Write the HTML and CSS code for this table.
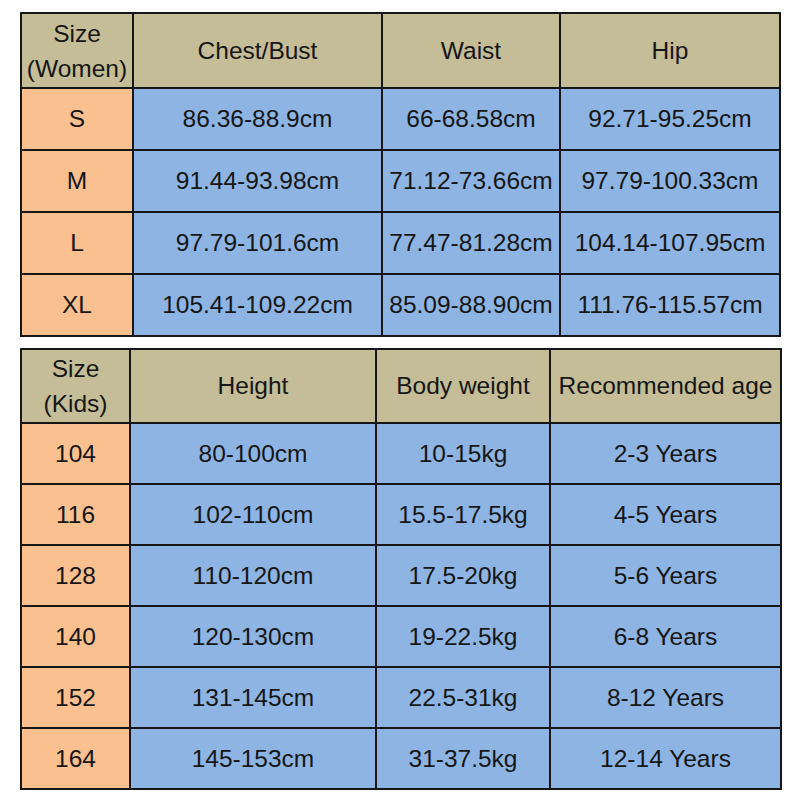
FILE: index.html
```html
<!DOCTYPE html>
<html>
<head>
<meta charset="utf-8">
<link rel="stylesheet" href="styles.css">
</head>
<body>
<div class="page">
  <div class="chart women">
    <div class="cell hd two">Size<br>(Women)</div>
    <div class="cell hd">Chest/Bust</div>
    <div class="cell hd">Waist</div>
    <div class="cell hd">Hip</div>

    <div class="cell sz">S</div>
    <div class="cell v">86.36-88.9cm</div>
    <div class="cell v">66-68.58cm</div>
    <div class="cell v">92.71-95.25cm</div>

    <div class="cell sz">M</div>
    <div class="cell v">91.44-93.98cm</div>
    <div class="cell v">71.12-73.66cm</div>
    <div class="cell v">97.79-100.33cm</div>

    <div class="cell sz">L</div>
    <div class="cell v">97.79-101.6cm</div>
    <div class="cell v">77.47-81.28cm</div>
    <div class="cell v">104.14-107.95cm</div>

    <div class="cell sz">XL</div>
    <div class="cell v">105.41-109.22cm</div>
    <div class="cell v">85.09-88.90cm</div>
    <div class="cell v">111.76-115.57cm</div>
  </div>

  <div class="chart kids">
    <div class="cell hd two">Size<br>(Kids)</div>
    <div class="cell hd">Height</div>
    <div class="cell hd">Body weight</div>
    <div class="cell hd">Recommended age</div>

    <div class="cell sz">104</div>
    <div class="cell v">80-100cm</div>
    <div class="cell v">10-15kg</div>
    <div class="cell v">2-3 Years</div>

    <div class="cell sz">116</div>
    <div class="cell v">102-110cm</div>
    <div class="cell v">15.5-17.5kg</div>
    <div class="cell v">4-5 Years</div>

    <div class="cell sz">128</div>
    <div class="cell v">110-120cm</div>
    <div class="cell v">17.5-20kg</div>
    <div class="cell v">5-6 Years</div>

    <div class="cell sz">140</div>
    <div class="cell v">120-130cm</div>
    <div class="cell v">19-22.5kg</div>
    <div class="cell v">6-8 Years</div>

    <div class="cell sz">152</div>
    <div class="cell v">131-145cm</div>
    <div class="cell v">22.5-31kg</div>
    <div class="cell v">8-12 Years</div>

    <div class="cell sz">164</div>
    <div class="cell v">145-153cm</div>
    <div class="cell v">31-37.5kg</div>
    <div class="cell v">12-14 Years</div>
  </div>
</div>
</body>
</html>
```

FILE: styles.css
```css
html, body {
  margin: 0;
  padding: 0;
  background: #ffffff;
}

.page {
  width: 800px;
  height: 800px;
  box-sizing: border-box;
  padding: 12px 0 0 20px;
  display: flex;
  flex-direction: column;
  gap: 11px;
  font-family: "Liberation Sans", Arial, sans-serif;
  font-size: 24.5px;
  color: #161616;
}

.chart {
  display: grid;
  gap: 2px;
  padding: 2px;
  background: #161616;
  width: max-content;
}

.women {
  grid-template-columns: 110px 247px 176px 218px;
  grid-template-rows: 73px 60px 60px 60px 60px;
}

.kids {
  grid-template-columns: 107px 244px 172px 229px;
  grid-template-rows: 72px repeat(6, 59px);
}

.cell {
  display: flex;
  align-items: center;
  justify-content: center;
  text-align: center;
  white-space: nowrap;
}

.hd {
  background: #c4bd97;
}

.two {
  line-height: 35px;
}

.sz {
  background: #fac090;
}

.v {
  background: #8db4e2;
}
```
